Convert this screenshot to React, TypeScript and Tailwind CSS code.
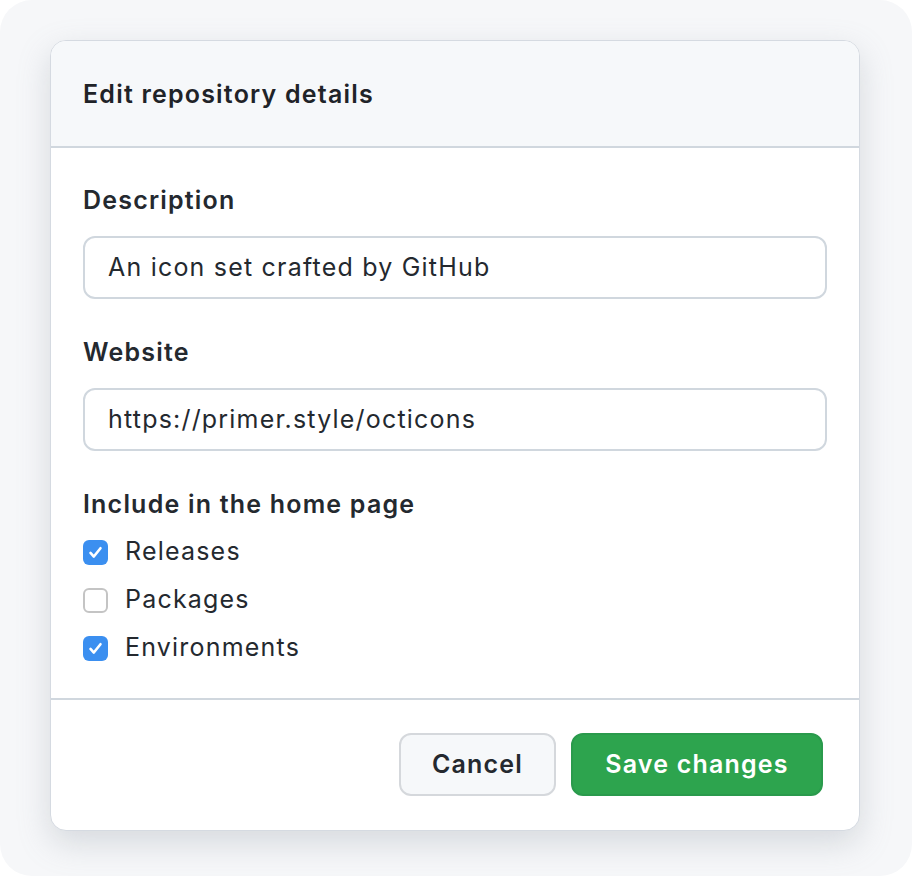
import React from 'react';

const items = [
  { label: 'Releases', checked: true },
  { label: 'Packages', checked: false },
  { label: 'Environments', checked: true },
];

function Check({ checked }: { checked: boolean }) {
  if (!checked) {
    return <span className="w-[25px] h-[25px] rounded-[6px] border-2 border-[#c4c4c4] bg-white shrink-0" />;
  }
  return (
    <span className="w-[25px] h-[25px] rounded-[6px] bg-[#3b8ff0] shrink-0 flex items-center justify-center">
      <svg width="19" height="19" viewBox="0 0 16 16" fill="none">
        <path d="M3.8 8.4l2.8 3 5.6-7" stroke="white" strokeWidth="2.2" strokeLinecap="round" strokeLinejoin="round" />
      </svg>
    </span>
  );
}

export default function App() {
  return (
    <div className="w-[912px] h-[876px] bg-white tracking-[1.2px]" style={{ fontFamily: 'Inter, "Noto Sans", sans-serif' }}>
      <div className="w-full h-full bg-[#f6f7f9] rounded-[32px] pt-[40px] px-[50px]">
        <div className="w-[810px] bg-white rounded-[16px] border border-[#d5dae1] shadow-[0_12px_32px_rgba(140,149,159,0.3)] overflow-hidden">
          <div className="h-[107px] bg-[#f6f8fa] border-b-2 border-[#d0d7de] flex items-center px-[32px] pt-[3px]">
            <h1 className="text-[25px] font-semibold text-[#1f2328]">Edit repository details</h1>
          </div>
          <div className="px-[32px] pt-[36px] pb-[26px] border-b-2 border-[#d0d7de]">
            <label className="block text-[25px] font-semibold text-[#24292f] leading-[32px]">Description</label>
            <div className="mt-[20px] h-[63px] rounded-[12px] border-2 border-[#d0d7de] flex items-center px-[23px] text-[25px] text-[#24292f]">
              An icon set crafted by GitHub
            </div>
            <label className="block mt-[37px] text-[25px] font-semibold text-[#24292f] leading-[32px]">Website</label>
            <div className="mt-[20px] h-[63px] rounded-[12px] border-2 border-[#d0d7de] flex items-center px-[23px] text-[25px] text-[#24292f]">
              https://primer.style/octicons
            </div>
            <label className="block mt-[37px] text-[25px] font-semibold text-[#24292f] leading-[32px]">Include in the home page</label>
            <div className="mt-[8px] flex flex-col">
              {items.map((it) => (
                <div key={it.label} className="h-[48px] flex items-center gap-[17px]">
                  <Check checked={it.checked} />
                  <span className="text-[25px] text-[#24292f]">{it.label}</span>
                </div>
              ))}
            </div>
          </div>
          <div className="px-[36px] pt-[33px] pb-[34px] flex justify-end gap-[15px]">
            <button className="h-[63px] w-[157px] rounded-[12px] border-2 border-[#d5d8dc] bg-[#f6f8fa] text-[25px] font-semibold text-[#24292f] tracking-[1.2px]">
              Cancel
            </button>
            <button className="h-[63px] w-[252px] rounded-[12px] border-2 border-[#2a9a4c] bg-[#2da44e] text-[25px] font-semibold text-white tracking-[1.2px]">
              Save changes
            </button>
          </div>
        </div>
      </div>
    </div>
  );
}
